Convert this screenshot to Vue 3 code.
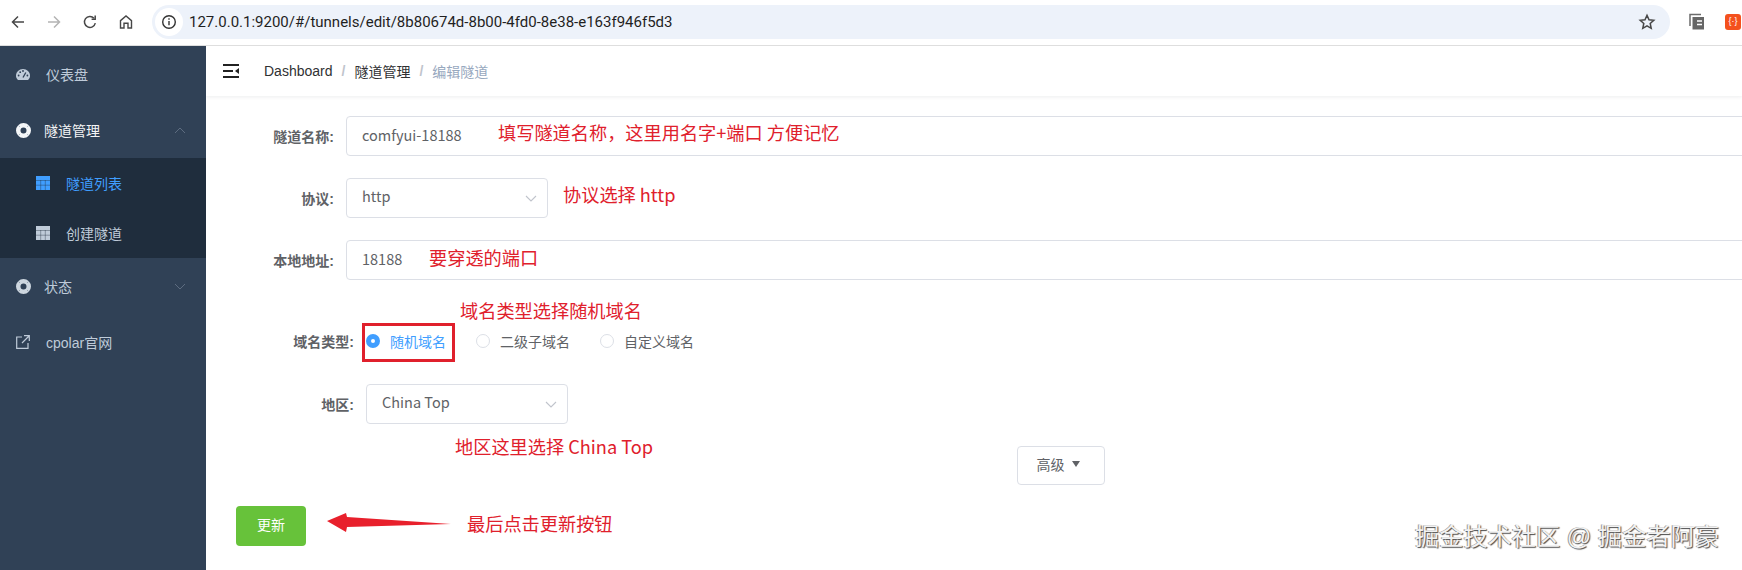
<script setup>
const radios = [
  { label: '随机域名', checked: true },
  { label: '二级子域名', checked: false },
  { label: '自定义域名', checked: false }
]
const notes = [
  { text: '填写隧道名称，这里用名字+端口 方便记忆', cls: 'n1' },
  { text: '协议选择 http', cls: 'n2' },
  { text: '要穿透的端口', cls: 'n3' },
  { text: '域名类型选择随机域名', cls: 'n4' },
  { text: '地区这里选择 China Top', cls: 'n5' },
  { text: '最后点击更新按钮', cls: 'n6' }
]
</script>

<template>
  <div class="page">
    <header class="chrome">
      <svg class="tb" viewBox="0 0 16 16" fill="none" stroke="#474747" stroke-width="1.5"><path d="M14 8H2.5M8 2.5 2.5 8 8 13.5"/></svg>
      <svg class="tb" viewBox="0 0 16 16" fill="none" stroke="#b4b4b4" stroke-width="1.5"><path d="M2 8h11.5M8 2.5 13.5 8 8 13.5"/></svg>
      <svg class="tb" viewBox="0 0 16 16" fill="none" stroke="#474747" stroke-width="1.5"><path d="M13.3 9.2A5.5 5.5 0 1 1 12 4.2"/><path d="M13.2 1.6v3.6H9.6" /></svg>
      <svg class="tb" viewBox="0 0 16 16" fill="none" stroke="#474747" stroke-width="1.4"><path d="M2.5 14V6.6L8 2l5.500 4.600V14h-3.500V9.300H6V14z"/></svg>
      <div class="omnibox">
        <span class="info">
          <svg width="16" height="16" viewBox="0 0 16 16" fill="none" stroke="#333" stroke-width="1.400"><circle cx="8" cy="8" r="6.300"/><path d="M8 7v4.300M8 4.300v1.500"/></svg>
        </span>
        <span class="url">127.0.0.1:9200/#/tunnels/edit/8b80674d-8b00-4fd0-8e38-e163f946f5d3</span>
        <svg class="star" width="18" height="18" viewBox="0 0 18 18" fill="none" stroke="#474747" stroke-width="1.500"><path d="m9 2.300 2 4.500 4.800.5-3.600 3.200 1 4.800L9 12.800l-4.200 2.500 1-4.800-3.600-3.200 4.800-.5z"/></svg>
      </div>
      <svg class="coll" width="16" height="17" viewBox="0 0 16 17"><path d="M1 13V1.500h11" fill="none" stroke="#6b6b6b" stroke-width="1.500"/><path d="M3.500 4h11.500v12.500H3.500z" fill="#666"/><path d="M8 8h5M8 11.500h5" stroke="#fff" stroke-width="1.500"/></svg>
      <span class="ext">{·}</span>
    </header>

    <div class="body">
      <aside class="sidebar">
        <div class="item">
          <svg class="ic" width="14" height="11" viewBox="0 0 14 11"><path d="M2 11C.7 9.800 0 8.300 0 6.700 0 3 3.100 0 7 0s7 3 7 6.700c0 1.600-.7 3.100-2 4.300z" fill="#bfcbd9"/><g fill="#304156"><circle cx="2.600" cy="6.500" r=".9"/><circle cx="4.200" cy="3.200" r=".9"/><circle cx="7" cy="2" r=".9"/><circle cx="11.400" cy="6.500" r=".9"/></g><path d="M7 8.500 9.800 3.500" stroke="#304156" stroke-width="1.300"/></svg>
          <span class="t46">仪表盘</span>
        </div>
        <div class="item open">
          <svg class="ic" width="15" height="15" viewBox="0 0 15 15"><circle cx="7.500" cy="7.500" r="5.250" fill="none" stroke="#f4f6f8" stroke-width="4.500"/><path d="m2.400 2.400 1.500 1.500m8.700-1.500-1.500 1.500M2.400 12.600l1.500-1.500m8.700 1.500-1.500-1.500" stroke="#a9b5c2" stroke-width="1"/></svg>
          <span class="t44">隧道管理</span>
          <svg class="chev" width="12" height="7" viewBox="0 0 12 7" fill="none" stroke="#5d6c80"><path d="m1 6 5-5 5 5"/></svg>
        </div>
        <div class="sub">
          <div class="subitem active">
            <svg width="14" height="14" viewBox="0 0 14 14"><rect width="14" height="14" fill="#409eff"/><path d="M0 4.500h14M0 9.200h14M4.700 4v10M9.300 4v10" stroke="#1f2d3d" stroke-width=".7" stroke-opacity=".55"/></svg>
            <span>隧道列表</span>
          </div>
          <div class="subitem">
            <svg width="14" height="14" viewBox="0 0 14 14"><rect width="14" height="14" fill="#bfcbd9"/><path d="M0 4.500h14M0 9.200h14M4.700 4v10M9.300 4v10" stroke="#1f2d3d" stroke-width=".7" stroke-opacity=".55"/></svg>
            <span>创建隧道</span>
          </div>
        </div>
        <div class="item">
          <svg class="ic" width="15" height="15" viewBox="0 0 15 15"><circle cx="7.500" cy="7.500" r="5.250" fill="none" stroke="#cdd6df" stroke-width="4.500"/><path d="m2.400 2.400 1.500 1.500m8.700-1.500-1.500 1.500M2.400 12.600l1.500-1.500m8.700 1.500-1.500-1.500" stroke="#8f9cab" stroke-width="1"/></svg>
          <span class="t44">状态</span>
          <svg class="chev" width="12" height="7" viewBox="0 0 12 7" fill="none" stroke="#5d6c80"><path d="m1 1 5 5 5-5"/></svg>
        </div>
        <div class="item">
          <svg class="ic" width="14" height="14" viewBox="0 0 14 14" fill="none" stroke="#bfcbd9" stroke-width="1.200"><path d="M6 2H.7v11.300H12V8M8 .7h5.300V6M13 1 6 8"/></svg>
          <span class="t46">cpolar官网</span>
        </div>
      </aside>

      <main class="main">
        <nav class="navbar">
          <svg width="16" height="14" viewBox="0 0 16 14"><path d="M0 1h16M0 7h10M0 13h16" stroke="#222" stroke-width="1.800"/><path d="M12 7l4-3v6z" fill="#222"/></svg>
          <div class="crumbs">
            <span>Dashboard</span><i>/</i><span>隧道管理</span><i>/</i><span class="last">编辑隧道</span>
          </div>
        </nav>

        <form class="form" @submit.prevent>
          <div class="row">
            <label>隧道名称:</label>
            <div class="box grow">comfyui-18188</div>
          </div>
          <div class="row">
            <label>协议:</label>
            <div class="box select">http
              <svg width="12" height="7" viewBox="0 0 12 7" fill="none" stroke="#c0c4cc" stroke-width="1.100"><path d="m1 1 5 5 5-5"/></svg>
            </div>
          </div>
          <div class="row">
            <label>本地地址:</label>
            <div class="box grow">18188</div>
          </div>
          <div class="row narrow radios">
            <label>域名类型:</label>
            <div class="radio" v-for="r in radios" :key="r.label" :class="{ on: r.checked }">
              <span class="dot"></span>{{ r.label }}
            </div>
          </div>
          <div class="row narrow">
            <label>地区:</label>
            <div class="box select">China Top
              <svg width="12" height="7" viewBox="0 0 12 7" fill="none" stroke="#c0c4cc" stroke-width="1.100"><path d="m1 1 5 5 5-5"/></svg>
            </div>
          </div>
          <div class="adv-row">
            <div class="adv">高级<span class="tri"></span></div>
          </div>
          <div class="submit">更新</div>
        </form>
      </main>
    </div>

    <div v-for="n in notes" :key="n.cls" class="note" :class="n.cls">{{ n.text }}</div>
    <div class="redbox"></div>
    <svg class="arrow" width="126" height="20" viewBox="0 0 126 20"><path d="M1 9 20 1l1 4 104 7-104 3-1 5z" fill="#e8202c"/></svg>
    <div class="mark">掘金技术社区 @ 掘金者阿豪</div>
  </div>
</template>

<style>
html, body { margin: 0; background: #fff; overflow: hidden; }
</style>

<style scoped>
.page {
  position: relative;
  width: 1742px;
  height: 570px;
  overflow: hidden;
  display: flex;
  flex-direction: column;
  font-family: "Liberation Sans", "Noto Sans CJK SC", sans-serif;
  font-size: 14px;
  color: #606266;
}
.chrome {
  height: 46px;
  flex: none;
  box-sizing: border-box;
  border-bottom: 1px solid #dedede;
  display: flex;
  align-items: center;
  padding: 0 2px 2px 10px;
}
.tb { width: 16px; height: 16px; flex: none; margin-right: 20px; }
.omnibox {
  width: 1518px;
  height: 34px;
  margin-left: -2px;
  border-radius: 17px;
  background: #edf2fa;
  display: flex;
  align-items: center;
  flex: none;
}
.info {
  width: 28px;
  height: 28px;
  margin-left: 3px;
  border-radius: 50%;
  background: #fff;
  display: flex;
  align-items: center;
  justify-content: center;
  flex: none;
}
.url {
  margin-left: 6px;
  font-family: Roboto, "Liberation Sans", sans-serif;
  font-size: 15px;
  color: #1f1f1f;
  white-space: nowrap;
}
.star { margin-left: auto; margin-right: 14px; }
.coll { margin-left: 19px; flex: none; }
.ext {
  margin-left: 20px;
  width: 16px;
  height: 16px;
  flex: none;
  border-radius: 3px;
  background: #f4511e;
  color: #fff;
  font-size: 9px;
  line-height: 15px;
  text-align: center;
}
.body { flex: 1; display: flex; min-height: 0; }
.sidebar {
  width: 206px;
  flex: none;
  background: #304156;
  color: #bfcbd9;
}
.item {
  height: 56px;
  display: flex;
  align-items: center;
  padding-left: 16px;
  position: relative;
}
.ic { flex: none; }
.t46 { position: absolute; left: 46px; }
.t44 { position: absolute; left: 44px; }
.open { color: #f4f4f5; }
.chev { position: absolute; left: 174px; top: 25px; }
.sub { background: #1f2d3d; }
.subitem {
  height: 50px;
  display: flex;
  align-items: center;
  gap: 16px;
  padding-left: 36px;
}
.subitem.active { color: #409eff; }
.main { flex: 1; min-width: 0; overflow: hidden; }
.navbar {
  height: 50px;
  box-sizing: border-box;
  display: flex;
  align-items: center;
  padding-left: 17px;
  box-shadow: 0 1px 4px rgba(0, 21, 41, 0.08);
}
.crumbs { margin-left: 25px; color: #303133; display: flex; align-items: center; }
.crumbs i { margin: 0 9px; color: #c0c4cc; font-style: normal; font-weight: 700; }
.crumbs .last { color: #97a8be; }
.form { padding-top: 20px; }
.row {
  height: 40px;
  margin-bottom: 22px;
  display: flex;
  align-items: center;
  gap: 12px;
}
.row label {
  width: 128px;
  flex: none;
  text-align: right;
  font-weight: 700;
  color: #606266;
}
.narrow label { width: 148px; }
.box {
  height: 40px;
  box-sizing: border-box;
  border: 1px solid #dcdfe6;
  border-radius: 4px;
  padding: 0 15px;
  line-height: 35px;
  font-family: "Noto Sans CJK SC", sans-serif;
  font-size: 14.5px;
}
.grow { flex: 1; margin-right: -40px; }
.select {
  width: 202px;
  display: flex;
  align-items: center;
  justify-content: space-between;
  padding: 0 10px 5px 15px;
}
.select svg { margin-top: 5px; }
.radios { gap: 0; margin-top: 42px; padding-bottom: 0; }
.radios label { margin-right: 12px; margin-bottom: 2px; }
.radio { display: flex; align-items: center; margin-right: 30px; margin-bottom: 2px; color: #606266; }
.dot {
  width: 14px;
  height: 14px;
  box-sizing: border-box;
  border: 1px solid #dcdfe6;
  border-radius: 50%;
  margin-right: 10px;
}
.radio.on { color: #409eff; }
.radio.on .dot {
  border: 5px solid #409eff;
  background: #fff;
}
.adv-row {
  display: flex;
  justify-content: center;
  margin: 0 -34px 21px 140px;
}
.adv {
  width: 88px;
  height: 39px;
  box-sizing: border-box;
  border: 1px solid #dcdfe6;
  border-radius: 4px;
  display: flex;
  align-items: center;
  justify-content: center;
  gap: 7px;
  padding: 0 6px 3px 0;
}
.tri {
  width: 0;
  height: 0;
  border: 4px solid transparent;
  border-top: 6px solid #606266;
  border-bottom: 0;
}
.submit {
  width: 70px;
  height: 40px;
  margin-left: 30px;
  border-radius: 4px;
  background: #67c23a;
  color: #fff;
  line-height: 38px;
  text-align: center;
}
.note {
  position: absolute;
  font-family: "Noto Sans CJK SC", sans-serif;
  font-size: 18.2px;
  line-height: 24px;
  color: #e0202c;
  white-space: nowrap;
}
.n1 { left: 498px; top: 120px; }
.n2 { left: 563px; top: 182px; }
.n3 { left: 429px; top: 245px; }
.n4 { left: 460px; top: 298px; }
.n5 { left: 455px; top: 434px; }
.n6 { left: 467px; top: 511px; }
.redbox {
  position: absolute;
  left: 362px;
  top: 323px;
  width: 93px;
  height: 39px;
  box-sizing: border-box;
  border: 3px solid #e0202c;
}
.arrow { position: absolute; left: 326px; top: 512px; }
.mark {
  position: absolute;
  left: 1415px;
  top: 520px;
  font-size: 24.2px;
  line-height: 34px;
  white-space: nowrap;
  color: #f2f2f2;
  text-shadow: 1px 1px 1px #4a4a4a, -1px 0 0 #9a9a9a;
}
</style>
